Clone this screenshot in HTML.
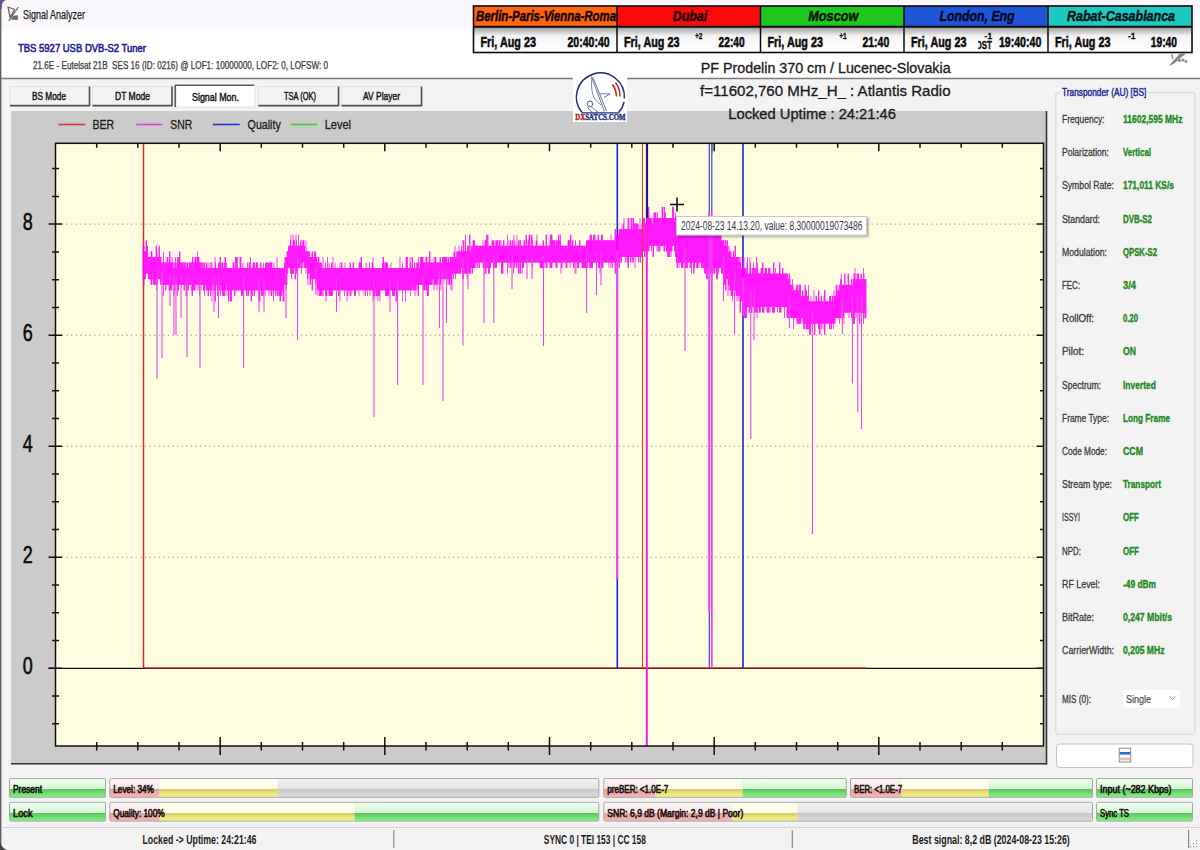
<!DOCTYPE html>
<html><head><meta charset="utf-8"><title>Signal Analyzer</title>
<style>html,body{margin:0;padding:0;background:#f3f3f3;overflow:hidden}svg{display:block}</style>
</head><body>
<svg width="1200" height="850" viewBox="0 0 1200 850"><defs><linearGradient id="gDate" x1="0" y1="0" x2="0" y2="1"><stop offset="0" stop-color="#9a9a9a"/><stop offset="0.35" stop-color="#f4f4f4"/><stop offset="1" stop-color="#ffffff"/></linearGradient><linearGradient id="gG" x1="0" y1="0" x2="0" y2="1"><stop offset="0" stop-color="#f2fff2"/><stop offset="0.55" stop-color="#d4f8d4"/><stop offset="0.55" stop-color="#62bc62"/><stop offset="0.8" stop-color="#6ee26e"/><stop offset="1" stop-color="#8cee8c"/></linearGradient><linearGradient id="gR" x1="0" y1="0" x2="0" y2="1"><stop offset="0" stop-color="#fff6f6"/><stop offset="0.55" stop-color="#f8e6e6"/><stop offset="0.55" stop-color="#dca0a0"/><stop offset="0.8" stop-color="#f0acac"/><stop offset="1" stop-color="#f6baba"/></linearGradient><linearGradient id="gY" x1="0" y1="0" x2="0" y2="1"><stop offset="0" stop-color="#fffff2"/><stop offset="0.55" stop-color="#fcfce2"/><stop offset="0.55" stop-color="#d2c86a"/><stop offset="0.8" stop-color="#eee67c"/><stop offset="1" stop-color="#f6f08c"/></linearGradient><linearGradient id="gN" x1="0" y1="0" x2="0" y2="1"><stop offset="0" stop-color="#f2f2f2"/><stop offset="0.55" stop-color="#e4e4e4"/><stop offset="0.55" stop-color="#c6c6c6"/><stop offset="0.8" stop-color="#d2d2d2"/><stop offset="1" stop-color="#dadada"/></linearGradient><filter id="sh" x="-5%" y="-20%" width="115%" height="160%"><feDropShadow dx="1.5" dy="1.5" stdDeviation="1.2" flood-color="#000" flood-opacity="0.35"/></filter></defs>
<rect x="0" y="0" width="1200" height="850" fill="#f3f3f3" />
<rect x="0" y="0" width="1200" height="29" fill="#faf8fc" />
<rect x="0" y="29" width="1200" height="49" fill="#ffffff" />
<line x1="0" y1="78.5" x2="1200" y2="78.5" stroke="#7a7a7a" stroke-width="1.6" />
<line x1="0.7" y1="0" x2="0.7" y2="850" stroke="#606060" stroke-width="1.4" />
<path d="M0 0 H6 Q1.6 1.6 1.6 7 V9 H0 Z" fill="#6a4c8c"/>
<path d="M0 850 V842 Q1.6 848 7 850 Z" fill="#404040"/>
<text x="23" y="18.8" font-family="'Liberation Sans', sans-serif" font-size="13.08" fill="#1a1a1a" stroke="#1a1a1a" stroke-width="0.25" textLength="62" lengthAdjust="spacingAndGlyphs" >Signal Analyzer</text>
<g stroke="#666" stroke-width="1.3" fill="none" stroke-linecap="round"><path d="M8 7 L10.5 19 M8 7 L14.5 9.5 M18 7.5 L9 20.5 M14.5 9.5 L10.5 17"/><path d="M12.5 16.5 L17.5 15.5 L17.5 19.5 L12 19.5 Z" fill="#666" stroke-width="0.6"/></g>
<text x="18" y="51.7" font-family="'Liberation Sans', sans-serif" font-size="11.63" fill="#1c1c96" stroke="#1c1c96" stroke-width="0.6" textLength="128" lengthAdjust="spacingAndGlyphs" >TBS 5927 USB DVB-S2 Tuner</text>
<text x="33" y="68.7" font-family="'Liberation Sans', sans-serif" font-size="10.17" fill="#3a3a3a" stroke="#3a3a3a" stroke-width="0.25" textLength="295" lengthAdjust="spacingAndGlyphs" >21.6E - Eutelsat 21B  SES 16 (ID: 0216) @ LOF1: 10000000, LOF2: 0, LOFSW: 0</text>
<rect x="473.5" y="6" width="143.8" height="20.5" fill="#ff6410" />
<rect x="473.5" y="27" width="143.8" height="25.5" fill="url(#gDate)" />
<rect x="617" y="6" width="143.8" height="20.5" fill="#ff0a0a" />
<rect x="617" y="27" width="143.8" height="25.5" fill="url(#gDate)" />
<rect x="760.5" y="6" width="143.8" height="20.5" fill="#1fc81f" />
<rect x="760.5" y="27" width="143.8" height="25.5" fill="url(#gDate)" />
<rect x="904" y="6" width="143.8" height="20.5" fill="#1f56d8" />
<rect x="904" y="27" width="143.8" height="25.5" fill="url(#gDate)" />
<rect x="1048" y="6" width="143.8" height="20.5" fill="#1fc8c0" />
<rect x="1048" y="27" width="143.8" height="25.5" fill="url(#gDate)" />
<clipPath id="cBer"><rect x="474" y="6" width="142" height="21"/></clipPath>
<text x="476" y="20.6" font-family="'Liberation Sans', sans-serif" font-size="15.55" fill="#1a0800" stroke="#1a0800" stroke-width="0.55" font-weight="bold" font-style="italic" textLength="140" lengthAdjust="spacingAndGlyphs" clip-path="url(#cBer)">Berlin-Paris-Vienna-Roma</text>
<text x="672.7" y="20.6" font-family="'Liberation Sans', sans-serif" font-size="15.55" fill="#1a0000" stroke="#1a0000" stroke-width="0.55" font-weight="bold" font-style="italic" textLength="34.5" lengthAdjust="spacingAndGlyphs" >Dubai</text>
<text x="808.3" y="20.6" font-family="'Liberation Sans', sans-serif" font-size="15.55" fill="#001a00" stroke="#001a00" stroke-width="0.55" font-weight="bold" font-style="italic" textLength="50" lengthAdjust="spacingAndGlyphs" >Moscow</text>
<text x="939.6" y="20.6" font-family="'Liberation Sans', sans-serif" font-size="15.55" fill="#000a2a" stroke="#000a2a" stroke-width="0.55" font-weight="bold" font-style="italic" textLength="75" lengthAdjust="spacingAndGlyphs" >London, Eng</text>
<text x="1067" y="20.6" font-family="'Liberation Sans', sans-serif" font-size="15.55" fill="#001a1a" stroke="#001a1a" stroke-width="0.55" font-weight="bold" font-style="italic" textLength="108" lengthAdjust="spacingAndGlyphs" >Rabat-Casablanca</text>
<text x="480.5" y="47.1" font-family="'Liberation Sans', sans-serif" font-size="15.26" fill="#0a0a0a" stroke="#0a0a0a" stroke-width="0.55" font-weight="bold" textLength="55.4" lengthAdjust="spacingAndGlyphs" >Fri, Aug 23</text>
<text x="624" y="47.1" font-family="'Liberation Sans', sans-serif" font-size="15.26" fill="#0a0a0a" stroke="#0a0a0a" stroke-width="0.55" font-weight="bold" textLength="55.4" lengthAdjust="spacingAndGlyphs" >Fri, Aug 23</text>
<text x="767.5" y="47.1" font-family="'Liberation Sans', sans-serif" font-size="15.26" fill="#0a0a0a" stroke="#0a0a0a" stroke-width="0.55" font-weight="bold" textLength="55.4" lengthAdjust="spacingAndGlyphs" >Fri, Aug 23</text>
<text x="911" y="47.1" font-family="'Liberation Sans', sans-serif" font-size="15.26" fill="#0a0a0a" stroke="#0a0a0a" stroke-width="0.55" font-weight="bold" textLength="55.4" lengthAdjust="spacingAndGlyphs" >Fri, Aug 23</text>
<text x="1055" y="47.1" font-family="'Liberation Sans', sans-serif" font-size="15.26" fill="#0a0a0a" stroke="#0a0a0a" stroke-width="0.55" font-weight="bold" textLength="55.4" lengthAdjust="spacingAndGlyphs" >Fri, Aug 23</text>
<text x="567.5" y="47.1" font-family="'Liberation Sans', sans-serif" font-size="15.26" fill="#0a0a0a" stroke="#0a0a0a" stroke-width="0.55" font-weight="bold" textLength="42.1" lengthAdjust="spacingAndGlyphs" >20:40:40</text>
<text x="718.6" y="47.1" font-family="'Liberation Sans', sans-serif" font-size="15.26" fill="#0a0a0a" stroke="#0a0a0a" stroke-width="0.55" font-weight="bold" textLength="26.1" lengthAdjust="spacingAndGlyphs" >22:40</text>
<text x="862.5" y="47.1" font-family="'Liberation Sans', sans-serif" font-size="15.26" fill="#0a0a0a" stroke="#0a0a0a" stroke-width="0.55" font-weight="bold" textLength="26.7" lengthAdjust="spacingAndGlyphs" >21:40</text>
<text x="998.9" y="47.1" font-family="'Liberation Sans', sans-serif" font-size="15.26" fill="#0a0a0a" stroke="#0a0a0a" stroke-width="0.55" font-weight="bold" textLength="42.4" lengthAdjust="spacingAndGlyphs" >19:40:40</text>
<text x="1150.8" y="47.1" font-family="'Liberation Sans', sans-serif" font-size="15.26" fill="#0a0a0a" stroke="#0a0a0a" stroke-width="0.55" font-weight="bold" textLength="26.2" lengthAdjust="spacingAndGlyphs" >19:40</text>
<text x="695" y="39" font-family="'Liberation Sans', sans-serif" font-size="9.88" fill="#0a0a0a" stroke="#0a0a0a" stroke-width="0.3" font-weight="bold" textLength="7.5" lengthAdjust="spacingAndGlyphs" >+2</text>
<text x="839.2" y="39.2" font-family="'Liberation Sans', sans-serif" font-size="9.88" fill="#0a0a0a" stroke="#0a0a0a" stroke-width="0.3" font-weight="bold" textLength="7.5" lengthAdjust="spacingAndGlyphs" >+1</text>
<text x="984.6" y="39.2" font-family="'Liberation Sans', sans-serif" font-size="9.88" fill="#0a0a0a" stroke="#0a0a0a" stroke-width="0.3" font-weight="bold" textLength="7.5" lengthAdjust="spacingAndGlyphs" >-1</text>
<text x="1128" y="38.9" font-family="'Liberation Sans', sans-serif" font-size="9.88" fill="#0a0a0a" stroke="#0a0a0a" stroke-width="0.3" font-weight="bold" textLength="7.5" lengthAdjust="spacingAndGlyphs" >-1</text>
<clipPath id="cDst"><rect x="978.3" y="38" width="20" height="14"/></clipPath>
<text x="976" y="48.8" font-family="'Liberation Sans', sans-serif" font-size="10.9" fill="#0a0a0a" stroke="#0a0a0a" stroke-width="0.3" font-weight="bold" textLength="16" lengthAdjust="spacingAndGlyphs" clip-path="url(#cDst)">DST</text>
<g stroke="#0a0a0a" fill="none"><rect x="473.5" y="6" width="718.5" height="46.5" stroke-width="1.6"/><line x1="473.5" y1="26.7" x2="1192" y2="26.7" stroke-width="2"/><line x1="617" y1="6" x2="617" y2="52.5" stroke-width="1.5"/><line x1="760.5" y1="6" x2="760.5" y2="52.5" stroke-width="1.5"/><line x1="904" y1="6" x2="904" y2="52.5" stroke-width="1.5"/><line x1="1048" y1="6" x2="1048" y2="52.5" stroke-width="1.5"/></g>
<path d="M1168.5 66 L1180 53.5 L1186 53.5 L1173.5 64 Z" fill="#858585"/><path d="M1171.5 53.5 L1172.8 59" stroke="#9a9a9a" stroke-width="1.5"/><g fill="#8a8a8a"><circle cx="1179.5" cy="60.5" r="1.6"/><circle cx="1183" cy="60" r="1.6"/><circle cx="1186" cy="61.5" r="1.4"/></g>
<rect x="10" y="86.5" width="80" height="19.5" fill="#f2f2f2" stroke="#e2e2e2" stroke-width="1" />
<line x1="89.5" y1="86.5" x2="89.5" y2="106" stroke="#505050" stroke-width="1.6" />
<line x1="10" y1="105.6" x2="90" y2="105.6" stroke="#505050" stroke-width="1.8" />
<rect x="92.5" y="86.5" width="80.0" height="19.5" fill="#f2f2f2" stroke="#e2e2e2" stroke-width="1" />
<line x1="172.0" y1="86.5" x2="172.0" y2="106" stroke="#505050" stroke-width="1.6" />
<line x1="92.5" y1="105.6" x2="172.5" y2="105.6" stroke="#505050" stroke-width="1.8" />
<rect x="175" y="85.5" width="80" height="21.5" fill="#ffffff" stroke="#e4e4e4" stroke-width="1" />
<line x1="175" y1="85.2" x2="254" y2="85.2" stroke="#5a5a5a" stroke-width="1.6" />
<line x1="175.3" y1="85" x2="175.3" y2="107" stroke="#5a5a5a" stroke-width="1.6" />
<rect x="258.5" y="86.5" width="80.5" height="19.5" fill="#f2f2f2" stroke="#e2e2e2" stroke-width="1" />
<line x1="338.5" y1="86.5" x2="338.5" y2="106" stroke="#505050" stroke-width="1.6" />
<line x1="258.5" y1="105.6" x2="339" y2="105.6" stroke="#505050" stroke-width="1.8" />
<rect x="341.5" y="86.5" width="80.5" height="19.5" fill="#f2f2f2" stroke="#e2e2e2" stroke-width="1" />
<line x1="421.5" y1="86.5" x2="421.5" y2="106" stroke="#505050" stroke-width="1.6" />
<line x1="341.5" y1="105.6" x2="422" y2="105.6" stroke="#505050" stroke-width="1.8" />
<text x="32" y="99.8" font-family="'Liberation Sans', sans-serif" font-size="11.05" fill="#141414" stroke="#141414" stroke-width="0.45" textLength="34" lengthAdjust="spacingAndGlyphs" >BS Mode</text>
<text x="115" y="99.8" font-family="'Liberation Sans', sans-serif" font-size="11.05" fill="#141414" stroke="#141414" stroke-width="0.45" textLength="35" lengthAdjust="spacingAndGlyphs" >DT Mode</text>
<text x="192" y="101" font-family="'Liberation Sans', sans-serif" font-size="11.05" fill="#141414" stroke="#141414" stroke-width="0.45" textLength="47" lengthAdjust="spacingAndGlyphs" >Signal Mon.</text>
<text x="284" y="99.8" font-family="'Liberation Sans', sans-serif" font-size="11.05" fill="#141414" stroke="#141414" stroke-width="0.45" textLength="32" lengthAdjust="spacingAndGlyphs" >TSA (OK)</text>
<text x="363" y="99.8" font-family="'Liberation Sans', sans-serif" font-size="11.05" fill="#141414" stroke="#141414" stroke-width="0.45" textLength="37" lengthAdjust="spacingAndGlyphs" >AV Player</text>
<rect x="11" y="111" width="1036" height="653" fill="#cbcbcb" />
<line x1="1046.5" y1="111" x2="1046.5" y2="764.5" stroke="#333" stroke-width="1.6" />
<line x1="11" y1="763.8" x2="1047" y2="763.8" stroke="#333" stroke-width="1.6" />
<rect x="55.5" y="143.3" width="988.0" height="602.7" fill="#fffde0" />
<line x1="58.4" y1="124.5" x2="85.3" y2="124.5" stroke="#e03030" stroke-width="1.6" />
<text x="92.4" y="129.3" font-family="'Liberation Sans', sans-serif" font-size="13.37" fill="#1a1a1a" stroke="#1a1a1a" stroke-width="0.3" textLength="21.8" lengthAdjust="spacingAndGlyphs" >BER</text>
<line x1="136.3" y1="124.5" x2="162.4" y2="124.5" stroke="#e040e0" stroke-width="1.6" />
<text x="170.3" y="129.3" font-family="'Liberation Sans', sans-serif" font-size="13.37" fill="#1a1a1a" stroke="#1a1a1a" stroke-width="0.3" textLength="22" lengthAdjust="spacingAndGlyphs" >SNR</text>
<line x1="212.8" y1="124.5" x2="239.7" y2="124.5" stroke="#3030e0" stroke-width="1.6" />
<text x="247.6" y="129.3" font-family="'Liberation Sans', sans-serif" font-size="13.37" fill="#1a1a1a" stroke="#1a1a1a" stroke-width="0.3" textLength="33.2" lengthAdjust="spacingAndGlyphs" >Quality</text>
<line x1="290.7" y1="124.5" x2="317.6" y2="124.5" stroke="#30d030" stroke-width="1.6" />
<text x="324.7" y="129.3" font-family="'Liberation Sans', sans-serif" font-size="13.37" fill="#1a1a1a" stroke="#1a1a1a" stroke-width="0.3" textLength="26.3" lengthAdjust="spacingAndGlyphs" >Level</text>
<line x1="62" y1="557.26" x2="1036.5" y2="557.26" stroke="#8a8a8a" stroke-width="1" stroke-dasharray="1.2 3.4"/>
<line x1="62" y1="446.2199999999999" x2="1036.5" y2="446.2199999999999" stroke="#8a8a8a" stroke-width="1" stroke-dasharray="1.2 3.4"/>
<line x1="62" y1="335.17999999999995" x2="1036.5" y2="335.17999999999995" stroke="#8a8a8a" stroke-width="1" stroke-dasharray="1.2 3.4"/>
<line x1="62" y1="224.13999999999993" x2="1036.5" y2="224.13999999999993" stroke="#8a8a8a" stroke-width="1" stroke-dasharray="1.2 3.4"/>
<line x1="48.5" y1="668.3" x2="1043.5" y2="668.3" stroke="#111" stroke-width="1.2" />
<path d="M52 723.8H59 M1040.0 723.8H1043.5 M52 696.1H59 M1040.0 696.1H1043.5 M48.5 668.3H62 M1036.5 668.3H1043.5 M52 640.5H59 M1040.0 640.5H1043.5 M52 612.8H59 M1040.0 612.8H1043.5 M52 585.0H59 M1040.0 585.0H1043.5 M48.5 557.3H62 M1036.5 557.3H1043.5 M52 529.5H59 M1040.0 529.5H1043.5 M52 501.7H59 M1040.0 501.7H1043.5 M52 474.0H59 M1040.0 474.0H1043.5 M48.5 446.2H62 M1036.5 446.2H1043.5 M52 418.5H59 M1040.0 418.5H1043.5 M52 390.7H59 M1040.0 390.7H1043.5 M52 362.9H59 M1040.0 362.9H1043.5 M48.5 335.2H62 M1036.5 335.2H1043.5 M52 307.4H59 M1040.0 307.4H1043.5 M52 279.7H59 M1040.0 279.7H1043.5 M52 251.9H59 M1040.0 251.9H1043.5 M48.5 224.1H62 M1036.5 224.1H1043.5 M52 196.4H59 M1040.0 196.4H1043.5 M52 168.6H59 M1040.0 168.6H1043.5 M96.7 143.3V147.8 M96.7 742.0V750.5 M137.8 143.3V147.8 M137.8 742.0V750.5 M179.0 143.3V147.8 M179.0 742.0V750.5 M220.2 143.3V151.3 M220.2 737.0V755.0 M261.3 143.3V147.8 M261.3 742.0V750.5 M302.5 143.3V147.8 M302.5 742.0V750.5 M343.7 143.3V147.8 M343.7 742.0V750.5 M384.8 143.3V151.3 M384.8 737.0V755.0 M426.0 143.3V147.8 M426.0 742.0V750.5 M467.2 143.3V147.8 M467.2 742.0V750.5 M508.3 143.3V147.8 M508.3 742.0V750.5 M549.5 143.3V151.3 M549.5 737.0V755.0 M590.7 143.3V147.8 M590.7 742.0V750.5 M631.8 143.3V147.8 M631.8 742.0V750.5 M673.0 143.3V147.8 M673.0 742.0V750.5 M714.2 143.3V151.3 M714.2 737.0V755.0 M755.3 143.3V147.8 M755.3 742.0V750.5 M796.5 143.3V147.8 M796.5 742.0V750.5 M837.7 143.3V147.8 M837.7 742.0V750.5 M878.8 143.3V151.3 M878.8 737.0V755.0 M920.0 143.3V147.8 M920.0 742.0V750.5 M961.2 143.3V147.8 M961.2 742.0V750.5 M1002.3 143.3V147.8 M1002.3 742.0V750.5" stroke="#111" stroke-width="1.5" fill="none"/>
<text x="22.8" y="674.1999999999999" font-family="'Liberation Sans', sans-serif" font-size="24.13" fill="#0a0a0a" stroke="#0a0a0a" stroke-width="0.6" textLength="10" lengthAdjust="spacingAndGlyphs" >0</text>
<text x="22.8" y="563.16" font-family="'Liberation Sans', sans-serif" font-size="24.13" fill="#0a0a0a" stroke="#0a0a0a" stroke-width="0.6" textLength="10" lengthAdjust="spacingAndGlyphs" >2</text>
<text x="22.8" y="452.1199999999999" font-family="'Liberation Sans', sans-serif" font-size="24.13" fill="#0a0a0a" stroke="#0a0a0a" stroke-width="0.6" textLength="10" lengthAdjust="spacingAndGlyphs" >4</text>
<text x="22.8" y="341.0799999999999" font-family="'Liberation Sans', sans-serif" font-size="24.13" fill="#0a0a0a" stroke="#0a0a0a" stroke-width="0.6" textLength="10" lengthAdjust="spacingAndGlyphs" >6</text>
<text x="22.8" y="230.03999999999994" font-family="'Liberation Sans', sans-serif" font-size="24.13" fill="#0a0a0a" stroke="#0a0a0a" stroke-width="0.6" textLength="10" lengthAdjust="spacingAndGlyphs" >8</text>
<path d="M143.5 143.3V668" stroke="#e02828" stroke-width="1.5" fill="none"/><path d="M143.5 668.2H866" stroke="#981010" stroke-width="1.4" fill="none"/>
<path d="M617.3 143.3V668 M743 143.3V668" stroke="#2222dd" stroke-width="1.6" fill="none"/>
<path d="M709.3 143.3V668 M711.8 143.3V212" stroke="#5050e0" stroke-width="1.3" fill="none"/>
<path d="M712 143.3V153" stroke="#6a6aa0" stroke-width="1.4" fill="none"/>
<path d="M647 143.3V220" stroke="#2a1080" stroke-width="2.2" fill="none"/>
<path d="M143.0 245.8V279.2 M143.5 245.8V279.2 M144.0 245.8V284.8 M144.5 251.4V279.2 M145.0 251.4V279.2 M145.5 251.4V279.2 M146.0 240.3V273.6 M146.5 240.3V273.6 M147.0 245.8V273.6 M147.5 245.8V273.6 M148.0 257.0V273.6 M148.5 257.0V279.2 M149.0 257.0V279.2 M149.5 257.0V279.2 M150.0 257.0V279.2 M150.5 257.0V279.2 M151.0 251.4V284.8 M151.5 251.4V284.8 M152.0 251.4V284.8 M152.5 257.0V279.2 M153.0 257.0V279.2 M153.5 257.0V284.8 M154.0 257.0V284.8 M154.5 257.0V284.8 M155.0 257.0V284.8 M155.5 257.0V284.8 M156.0 245.8V279.2 M156.5 245.8V290.3 M157.0 251.4V279.2 M157.5 257.0V284.8 M158.0 257.0V279.2 M158.5 257.0V279.2 M159.0 245.8V279.2 M159.5 245.8V279.2 M160.0 257.0V279.2 M160.5 257.0V284.8 M161.0 257.0V284.8 M161.5 262.5V279.2 M162.0 262.5V284.8 M162.5 262.5V279.2 M163.0 262.5V284.8 M163.5 251.4V295.9 M164.0 262.5V284.8 M164.5 262.5V284.8 M165.0 262.5V284.8 M165.5 262.5V290.3 M166.0 262.5V290.3 M166.5 262.5V284.8 M167.0 257.0V284.8 M167.5 257.0V284.8 M168.0 257.0V284.8 M168.5 262.5V284.8 M169.0 262.5V290.3 M169.5 251.4V290.3 M170.0 251.4V290.3 M170.5 262.5V290.3 M171.0 262.5V290.3 M171.5 262.5V290.3 M172.0 257.0V290.3 M172.5 262.5V284.8 M173.0 262.5V284.8 M173.5 268.1V284.8 M174.0 262.5V295.9 M174.5 268.1V290.3 M175.0 262.5V290.3 M175.5 257.0V284.8 M176.0 262.5V284.8 M176.5 268.1V284.8 M177.0 262.5V284.8 M177.5 257.0V295.9 M178.0 262.5V290.3 M178.5 257.0V290.3 M179.0 257.0V284.8 M179.5 251.4V284.8 M180.0 251.4V284.8 M180.5 262.5V284.8 M181.0 262.5V284.8 M181.5 262.5V284.8 M182.0 262.5V284.8 M182.5 262.5V284.8 M183.0 268.1V284.8 M183.5 262.5V284.8 M184.0 262.5V290.3 M184.5 262.5V290.3 M185.0 268.1V284.8 M185.5 262.5V284.8 M186.0 262.5V295.9 M186.5 268.1V295.9 M187.0 262.5V284.8 M187.5 262.5V290.3 M188.0 262.5V284.8 M188.5 268.1V290.3 M189.0 268.1V284.8 M189.5 262.5V284.8 M190.0 262.5V284.8 M190.5 262.5V284.8 M191.0 262.5V290.3 M191.5 262.5V284.8 M192.0 262.5V295.9 M192.5 257.0V295.9 M193.0 257.0V290.3 M193.5 262.5V290.3 M194.0 268.1V290.3 M194.5 262.5V290.3 M195.0 257.0V290.3 M195.5 257.0V284.8 M196.0 257.0V284.8 M196.5 262.5V284.8 M197.0 257.0V290.3 M197.5 251.4V284.8 M198.0 257.0V284.8 M198.5 257.0V284.8 M199.0 257.0V290.3 M199.5 262.5V295.9 M200.0 262.5V284.8 M200.5 262.5V284.8 M201.0 262.5V290.3 M201.5 262.5V284.8 M202.0 268.1V284.8 M202.5 262.5V284.8 M203.0 268.1V284.8 M203.5 262.5V290.3 M204.0 268.1V290.3 M204.5 262.5V295.9 M205.0 268.1V290.3 M205.5 268.1V284.8 M206.0 262.5V284.8 M206.5 262.5V290.3 M207.0 268.1V290.3 M207.5 268.1V290.3 M208.0 262.5V295.9 M208.5 268.1V295.9 M209.0 268.1V290.3 M209.5 268.1V290.3 M210.0 262.5V290.3 M210.5 268.1V295.9 M211.0 262.5V290.3 M211.5 268.1V290.3 M212.0 262.5V301.4 M212.5 268.1V284.8 M213.0 268.1V290.3 M213.5 268.1V284.8 M214.0 268.1V290.3 M214.5 268.1V290.3 M215.0 257.0V301.4 M215.5 262.5V301.4 M216.0 268.1V284.8 M216.5 268.1V284.8 M217.0 268.1V290.3 M217.5 268.1V295.9 M218.0 268.1V284.8 M218.5 262.5V301.4 M219.0 268.1V290.3 M219.5 262.5V290.3 M220.0 257.0V284.8 M220.5 257.0V295.9 M221.0 268.1V284.8 M221.5 262.5V290.3 M222.0 268.1V290.3 M222.5 262.5V295.9 M223.0 262.5V295.9 M223.5 268.1V295.9 M224.0 268.1V295.9 M224.5 262.5V295.9 M225.0 257.0V290.3 M225.5 257.0V290.3 M226.0 268.1V295.9 M226.5 262.5V284.8 M227.0 268.1V290.3 M227.5 268.1V290.3 M228.0 268.1V295.9 M228.5 268.1V301.4 M229.0 268.1V301.4 M229.5 268.1V290.3 M230.0 268.1V284.8 M230.5 268.1V301.4 M231.0 268.1V301.4 M231.5 268.1V301.4 M232.0 268.1V290.3 M232.5 268.1V290.3 M233.0 262.5V290.3 M233.5 262.5V290.3 M234.0 262.5V284.8 M234.5 268.1V295.9 M235.0 268.1V295.9 M235.5 257.0V290.3 M236.0 257.0V290.3 M236.5 257.0V290.3 M237.0 268.1V290.3 M237.5 257.0V290.3 M238.0 268.1V290.3 M238.5 268.1V290.3 M239.0 268.1V290.3 M239.5 268.1V290.3 M240.0 257.0V290.3 M240.5 257.0V290.3 M241.0 257.0V290.3 M241.5 268.1V295.9 M242.0 268.1V295.9 M242.5 268.1V295.9 M243.0 262.5V295.9 M243.5 268.1V290.3 M244.0 268.1V290.3 M244.5 268.1V290.3 M245.0 268.1V290.3 M245.5 268.1V290.3 M246.0 268.1V290.3 M246.5 268.1V295.9 M247.0 268.1V295.9 M247.5 262.5V290.3 M248.0 268.1V295.9 M248.5 268.1V295.9 M249.0 262.5V290.3 M249.5 262.5V290.3 M250.0 268.1V290.3 M250.5 257.0V290.3 M251.0 268.1V301.4 M251.5 268.1V301.4 M252.0 268.1V290.3 M252.5 268.1V295.9 M253.0 262.5V290.3 M253.5 262.5V290.3 M254.0 262.5V295.9 M254.5 262.5V295.9 M255.0 268.1V290.3 M255.5 268.1V290.3 M256.0 262.5V290.3 M256.5 262.5V290.3 M257.0 262.5V290.3 M257.5 262.5V290.3 M258.0 268.1V290.3 M258.5 268.1V290.3 M259.0 268.1V301.4 M259.5 268.1V301.4 M260.0 268.1V301.4 M260.5 262.5V290.3 M261.0 262.5V290.3 M261.5 268.1V295.9 M262.0 268.1V295.9 M262.5 268.1V295.9 M263.0 268.1V290.3 M263.5 262.5V295.9 M264.0 268.1V290.3 M264.5 268.1V290.3 M265.0 268.1V295.9 M265.5 262.5V290.3 M266.0 262.5V290.3 M266.5 262.5V290.3 M267.0 268.1V290.3 M267.5 262.5V290.3 M268.0 262.5V290.3 M268.5 262.5V290.3 M269.0 268.1V295.9 M269.5 262.5V290.3 M270.0 262.5V290.3 M270.5 262.5V290.3 M271.0 262.5V295.9 M271.5 262.5V295.9 M272.0 262.5V295.9 M272.5 268.1V290.3 M273.0 268.1V290.3 M273.5 268.1V301.4 M274.0 262.5V290.3 M274.5 268.1V290.3 M275.0 268.1V290.3 M275.5 268.1V295.9 M276.0 268.1V295.9 M276.5 268.1V290.3 M277.0 257.0V290.3 M277.5 268.1V295.9 M278.0 268.1V295.9 M278.5 268.1V290.3 M279.0 268.1V295.9 M279.5 268.1V295.9 M280.0 268.1V301.4 M280.5 268.1V301.4 M281.0 268.1V295.9 M281.5 268.1V295.9 M282.0 268.1V290.3 M282.5 268.1V290.3 M283.0 268.1V301.4 M283.5 268.1V301.4 M284.0 268.1V301.4 M284.5 262.5V284.8 M285.0 257.0V284.8 M285.5 257.0V284.8 M286.0 257.0V290.3 M286.5 257.0V284.8 M287.0 251.4V284.8 M287.5 251.4V273.6 M288.0 251.4V268.1 M288.5 245.8V268.1 M289.0 245.8V268.1 M289.5 245.8V268.1 M290.0 245.8V268.1 M290.5 240.3V273.6 M291.0 234.7V273.6 M291.5 245.8V279.2 M292.0 245.8V273.6 M292.5 245.8V273.6 M293.0 234.7V273.6 M293.5 240.3V273.6 M294.0 240.3V268.1 M294.5 240.3V268.1 M295.0 245.8V279.2 M295.5 245.8V279.2 M296.0 234.7V268.1 M296.5 240.3V273.6 M297.0 245.8V273.6 M297.5 245.8V268.1 M298.0 245.8V268.1 M298.5 234.7V268.1 M299.0 245.8V268.1 M299.5 245.8V268.1 M300.0 245.8V262.5 M300.5 240.3V268.1 M301.0 245.8V262.5 M301.5 245.8V273.6 M302.0 240.3V268.1 M302.5 245.8V262.5 M303.0 240.3V268.1 M303.5 240.3V262.5 M304.0 240.3V262.5 M304.5 245.8V268.1 M305.0 245.8V268.1 M305.5 251.4V268.1 M306.0 240.3V273.6 M306.5 251.4V268.1 M307.0 251.4V268.1 M307.5 251.4V279.2 M308.0 251.4V284.8 M308.5 251.4V273.6 M309.0 251.4V273.6 M309.5 251.4V273.6 M310.0 257.0V284.8 M310.5 257.0V284.8 M311.0 257.0V279.2 M311.5 257.0V279.2 M312.0 251.4V290.3 M312.5 251.4V290.3 M313.0 257.0V279.2 M313.5 257.0V279.2 M314.0 257.0V279.2 M314.5 251.4V279.2 M315.0 251.4V279.2 M315.5 251.4V284.8 M316.0 257.0V279.2 M316.5 257.0V279.2 M317.0 257.0V290.3 M317.5 262.5V290.3 M318.0 262.5V295.9 M318.5 257.0V290.3 M319.0 257.0V290.3 M319.5 262.5V295.9 M320.0 262.5V295.9 M320.5 262.5V295.9 M321.0 262.5V295.9 M321.5 262.5V295.9 M322.0 268.1V295.9 M322.5 268.1V290.3 M323.0 257.0V295.9 M323.5 268.1V290.3 M324.0 268.1V290.3 M324.5 268.1V290.3 M325.0 268.1V290.3 M325.5 262.5V295.9 M326.0 268.1V301.4 M326.5 268.1V295.9 M327.0 268.1V295.9 M327.5 257.0V290.3 M328.0 268.1V290.3 M328.5 268.1V290.3 M329.0 262.5V295.9 M329.5 268.1V295.9 M330.0 268.1V295.9 M330.5 268.1V295.9 M331.0 268.1V295.9 M331.5 262.5V295.9 M332.0 262.5V295.9 M332.5 268.1V295.9 M333.0 257.0V290.3 M333.5 268.1V290.3 M334.0 268.1V290.3 M334.5 268.1V290.3 M335.0 262.5V290.3 M335.5 268.1V290.3 M336.0 268.1V290.3 M336.5 268.1V290.3 M337.0 268.1V290.3 M337.5 268.1V290.3 M338.0 268.1V290.3 M338.5 268.1V295.9 M339.0 268.1V295.9 M339.5 268.1V290.3 M340.0 262.5V301.4 M340.5 268.1V290.3 M341.0 268.1V290.3 M341.5 262.5V290.3 M342.0 262.5V290.3 M342.5 268.1V290.3 M343.0 268.1V290.3 M343.5 268.1V290.3 M344.0 268.1V290.3 M344.5 268.1V295.9 M345.0 262.5V290.3 M345.5 268.1V290.3 M346.0 268.1V290.3 M346.5 268.1V290.3 M347.0 268.1V301.4 M347.5 268.1V295.9 M348.0 268.1V295.9 M348.5 268.1V290.3 M349.0 268.1V290.3 M349.5 268.1V290.3 M350.0 262.5V295.9 M350.5 262.5V295.9 M351.0 268.1V295.9 M351.5 268.1V290.3 M352.0 268.1V290.3 M352.5 268.1V290.3 M353.0 262.5V290.3 M353.5 262.5V290.3 M354.0 268.1V290.3 M354.5 268.1V295.9 M355.0 268.1V295.9 M355.5 268.1V295.9 M356.0 268.1V290.3 M356.5 268.1V290.3 M357.0 268.1V290.3 M357.5 268.1V290.3 M358.0 268.1V290.3 M358.5 268.1V290.3 M359.0 262.5V295.9 M359.5 262.5V290.3 M360.0 262.5V290.3 M360.5 262.5V290.3 M361.0 257.0V290.3 M361.5 257.0V290.3 M362.0 268.1V290.3 M362.5 268.1V290.3 M363.0 268.1V290.3 M363.5 268.1V290.3 M364.0 268.1V295.9 M364.5 268.1V290.3 M365.0 268.1V290.3 M365.5 268.1V295.9 M366.0 262.5V290.3 M366.5 268.1V290.3 M367.0 268.1V290.3 M367.5 268.1V295.9 M368.0 268.1V290.3 M368.5 268.1V290.3 M369.0 268.1V290.3 M369.5 262.5V290.3 M370.0 268.1V295.9 M370.5 268.1V290.3 M371.0 268.1V290.3 M371.5 268.1V290.3 M372.0 262.5V290.3 M372.5 262.5V290.3 M373.0 257.0V301.4 M373.5 268.1V295.9 M374.0 268.1V295.9 M374.5 268.1V295.9 M375.0 268.1V295.9 M375.5 268.1V290.3 M376.0 268.1V295.9 M376.5 268.1V295.9 M377.0 268.1V295.9 M377.5 268.1V295.9 M378.0 268.1V301.4 M378.5 268.1V295.9 M379.0 268.1V295.9 M379.5 268.1V295.9 M380.0 268.1V301.4 M380.5 268.1V290.3 M381.0 268.1V290.3 M381.5 268.1V290.3 M382.0 268.1V290.3 M382.5 262.5V290.3 M383.0 257.0V290.3 M383.5 257.0V290.3 M384.0 262.5V290.3 M384.5 268.1V290.3 M385.0 262.5V290.3 M385.5 262.5V295.9 M386.0 262.5V295.9 M386.5 262.5V295.9 M387.0 262.5V295.9 M387.5 262.5V295.9 M388.0 268.1V295.9 M388.5 268.1V295.9 M389.0 268.1V295.9 M389.5 268.1V290.3 M390.0 268.1V290.3 M390.5 268.1V290.3 M391.0 262.5V290.3 M391.5 268.1V290.3 M392.0 268.1V290.3 M392.5 268.1V295.9 M393.0 268.1V295.9 M393.5 268.1V295.9 M394.0 268.1V295.9 M394.5 268.1V295.9 M395.0 268.1V290.3 M395.5 268.1V290.3 M396.0 268.1V301.4 M396.5 268.1V301.4 M397.0 268.1V290.3 M397.5 268.1V290.3 M398.0 268.1V290.3 M398.5 268.1V290.3 M399.0 268.1V290.3 M399.5 268.1V290.3 M400.0 257.0V290.3 M400.5 268.1V290.3 M401.0 268.1V290.3 M401.5 268.1V290.3 M402.0 268.1V290.3 M402.5 262.5V301.4 M403.0 268.1V290.3 M403.5 268.1V290.3 M404.0 268.1V290.3 M404.5 268.1V290.3 M405.0 268.1V290.3 M405.5 268.1V301.4 M406.0 257.0V290.3 M406.5 257.0V290.3 M407.0 257.0V290.3 M407.5 257.0V290.3 M408.0 268.1V290.3 M408.5 268.1V290.3 M409.0 268.1V290.3 M409.5 268.1V290.3 M410.0 257.0V290.3 M410.5 262.5V295.9 M411.0 268.1V290.3 M411.5 268.1V290.3 M412.0 257.0V284.8 M412.5 257.0V290.3 M413.0 268.1V290.3 M413.5 268.1V290.3 M414.0 268.1V284.8 M414.5 262.5V290.3 M415.0 262.5V295.9 M415.5 268.1V290.3 M416.0 268.1V290.3 M416.5 262.5V284.8 M417.0 268.1V290.3 M417.5 262.5V284.8 M418.0 262.5V295.9 M418.5 257.0V295.9 M419.0 268.1V284.8 M419.5 268.1V284.8 M420.0 262.5V284.8 M420.5 257.0V284.8 M421.0 257.0V284.8 M421.5 257.0V284.8 M422.0 257.0V284.8 M422.5 257.0V284.8 M423.0 257.0V284.8 M423.5 262.5V290.3 M424.0 262.5V290.3 M424.5 262.5V290.3 M425.0 262.5V290.3 M425.5 262.5V284.8 M426.0 257.0V290.3 M426.5 257.0V290.3 M427.0 257.0V290.3 M427.5 262.5V295.9 M428.0 262.5V295.9 M428.5 262.5V295.9 M429.0 257.0V284.8 M429.5 251.4V284.8 M430.0 251.4V284.8 M430.5 262.5V284.8 M431.0 262.5V284.8 M431.5 262.5V284.8 M432.0 262.5V284.8 M432.5 262.5V279.2 M433.0 262.5V284.8 M433.5 262.5V279.2 M434.0 257.0V290.3 M434.5 262.5V284.8 M435.0 257.0V284.8 M435.5 257.0V284.8 M436.0 257.0V284.8 M436.5 262.5V284.8 M437.0 262.5V290.3 M437.5 262.5V284.8 M438.0 262.5V279.2 M438.5 262.5V279.2 M439.0 262.5V284.8 M439.5 262.5V284.8 M440.0 257.0V284.8 M440.5 257.0V284.8 M441.0 262.5V290.3 M441.5 262.5V279.2 M442.0 262.5V279.2 M442.5 257.0V279.2 M443.0 257.0V279.2 M443.5 257.0V279.2 M444.0 257.0V279.2 M444.5 257.0V279.2 M445.0 257.0V279.2 M445.5 257.0V279.2 M446.0 257.0V279.2 M446.5 257.0V284.8 M447.0 262.5V279.2 M447.5 262.5V279.2 M448.0 257.0V284.8 M448.5 257.0V279.2 M449.0 262.5V284.8 M449.5 262.5V284.8 M450.0 257.0V284.8 M450.5 257.0V279.2 M451.0 257.0V290.3 M451.5 257.0V284.8 M452.0 257.0V290.3 M452.5 257.0V273.6 M453.0 257.0V273.6 M453.5 257.0V279.2 M454.0 251.4V273.6 M454.5 251.4V273.6 M455.0 245.8V273.6 M455.5 257.0V279.2 M456.0 257.0V273.6 M456.5 251.4V273.6 M457.0 257.0V273.6 M457.5 251.4V273.6 M458.0 251.4V273.6 M458.5 251.4V273.6 M459.0 245.8V273.6 M459.5 251.4V273.6 M460.0 251.4V273.6 M460.5 251.4V273.6 M461.0 251.4V273.6 M461.5 245.8V268.1 M462.0 251.4V268.1 M462.5 251.4V273.6 M463.0 240.3V279.2 M463.5 240.3V279.2 M464.0 251.4V268.1 M464.5 251.4V273.6 M465.0 240.3V273.6 M465.5 234.7V273.6 M466.0 251.4V273.6 M466.5 251.4V273.6 M467.0 251.4V279.2 M467.5 245.8V273.6 M468.0 245.8V273.6 M468.5 245.8V273.6 M469.0 251.4V268.1 M469.5 234.7V273.6 M470.0 234.7V273.6 M470.5 251.4V273.6 M471.0 245.8V268.1 M471.5 245.8V268.1 M472.0 251.4V273.6 M472.5 245.8V273.6 M473.0 240.3V268.1 M473.5 240.3V268.1 M474.0 240.3V268.1 M474.5 240.3V268.1 M475.0 245.8V268.1 M475.5 245.8V262.5 M476.0 245.8V268.1 M476.5 245.8V262.5 M477.0 245.8V262.5 M477.5 245.8V268.1 M478.0 245.8V262.5 M478.5 245.8V262.5 M479.0 245.8V268.1 M479.5 245.8V268.1 M480.0 245.8V262.5 M480.5 245.8V262.5 M481.0 245.8V262.5 M481.5 245.8V262.5 M482.0 245.8V262.5 M482.5 245.8V262.5 M483.0 240.3V268.1 M483.5 245.8V268.1 M484.0 245.8V268.1 M484.5 245.8V262.5 M485.0 240.3V273.6 M485.5 240.3V273.6 M486.0 240.3V273.6 M486.5 234.7V268.1 M487.0 245.8V262.5 M487.5 234.7V268.1 M488.0 234.7V268.1 M488.5 245.8V273.6 M489.0 245.8V273.6 M489.5 245.8V273.6 M490.0 245.8V268.1 M490.5 245.8V268.1 M491.0 245.8V262.5 M491.5 245.8V262.5 M492.0 240.3V262.5 M492.5 240.3V262.5 M493.0 240.3V262.5 M493.5 240.3V268.1 M494.0 245.8V268.1 M494.5 245.8V268.1 M495.0 240.3V262.5 M495.5 245.8V268.1 M496.0 240.3V268.1 M496.5 240.3V268.1 M497.0 240.3V262.5 M497.5 240.3V262.5 M498.0 240.3V262.5 M498.5 245.8V262.5 M499.0 245.8V262.5 M499.5 240.3V262.5 M500.0 240.3V262.5 M500.5 245.8V262.5 M501.0 240.3V262.5 M501.5 245.8V273.6 M502.0 245.8V273.6 M502.5 245.8V273.6 M503.0 245.8V273.6 M503.5 240.3V262.5 M504.0 240.3V262.5 M504.5 245.8V262.5 M505.0 245.8V262.5 M505.5 245.8V262.5 M506.0 245.8V262.5 M506.5 245.8V262.5 M507.0 245.8V262.5 M507.5 234.7V273.6 M508.0 245.8V262.5 M508.5 245.8V262.5 M509.0 240.3V268.1 M509.5 245.8V262.5 M510.0 245.8V262.5 M510.5 240.3V268.1 M511.0 240.3V268.1 M511.5 245.8V262.5 M512.0 245.8V262.5 M512.5 240.3V262.5 M513.0 240.3V262.5 M513.5 245.8V273.6 M514.0 234.7V262.5 M514.5 245.8V268.1 M515.0 240.3V262.5 M515.5 245.8V262.5 M516.0 245.8V268.1 M516.5 245.8V268.1 M517.0 234.7V268.1 M517.5 245.8V262.5 M518.0 245.8V262.5 M518.5 240.3V273.6 M519.0 240.3V273.6 M519.5 245.8V262.5 M520.0 240.3V273.6 M520.5 240.3V273.6 M521.0 245.8V262.5 M521.5 245.8V262.5 M522.0 245.8V273.6 M522.5 245.8V268.1 M523.0 245.8V268.1 M523.5 245.8V268.1 M524.0 240.3V262.5 M524.5 240.3V262.5 M525.0 240.3V262.5 M525.5 245.8V262.5 M526.0 234.7V262.5 M526.5 234.7V262.5 M527.0 245.8V262.5 M527.5 245.8V262.5 M528.0 240.3V262.5 M528.5 240.3V262.5 M529.0 234.7V262.5 M529.5 234.7V262.5 M530.0 234.7V262.5 M530.5 245.8V262.5 M531.0 245.8V262.5 M531.5 234.7V262.5 M532.0 234.7V262.5 M532.5 240.3V268.1 M533.0 245.8V262.5 M533.5 245.8V262.5 M534.0 245.8V262.5 M534.5 245.8V262.5 M535.0 245.8V262.5 M535.5 245.8V262.5 M536.0 240.3V262.5 M536.5 240.3V262.5 M537.0 234.7V262.5 M537.5 245.8V262.5 M538.0 245.8V262.5 M538.5 245.8V262.5 M539.0 245.8V262.5 M539.5 245.8V262.5 M540.0 245.8V268.1 M540.5 245.8V268.1 M541.0 245.8V268.1 M541.5 245.8V268.1 M542.0 245.8V268.1 M542.5 245.8V268.1 M543.0 240.3V262.5 M543.5 240.3V262.5 M544.0 245.8V268.1 M544.5 245.8V262.5 M545.0 245.8V262.5 M545.5 245.8V262.5 M546.0 234.7V268.1 M546.5 234.7V268.1 M547.0 245.8V268.1 M547.5 245.8V262.5 M548.0 245.8V262.5 M548.5 245.8V262.5 M549.0 245.8V262.5 M549.5 245.8V262.5 M550.0 240.3V268.1 M550.5 234.7V268.1 M551.0 234.7V268.1 M551.5 234.7V268.1 M552.0 234.7V268.1 M552.5 240.3V262.5 M553.0 240.3V262.5 M553.5 240.3V262.5 M554.0 240.3V262.5 M554.5 240.3V262.5 M555.0 240.3V262.5 M555.5 245.8V262.5 M556.0 240.3V268.1 M556.5 240.3V268.1 M557.0 245.8V268.1 M557.5 240.3V262.5 M558.0 240.3V262.5 M558.5 234.7V262.5 M559.0 234.7V262.5 M559.5 240.3V262.5 M560.0 240.3V262.5 M560.5 234.7V262.5 M561.0 245.8V273.6 M561.5 245.8V268.1 M562.0 245.8V268.1 M562.5 245.8V262.5 M563.0 245.8V262.5 M563.5 245.8V262.5 M564.0 245.8V262.5 M564.5 245.8V262.5 M565.0 245.8V262.5 M565.5 245.8V262.5 M566.0 245.8V268.1 M566.5 245.8V268.1 M567.0 245.8V268.1 M567.5 245.8V262.5 M568.0 240.3V262.5 M568.5 240.3V262.5 M569.0 240.3V262.5 M569.5 240.3V262.5 M570.0 245.8V268.1 M570.5 234.7V262.5 M571.0 234.7V262.5 M571.5 245.8V262.5 M572.0 245.8V262.5 M572.5 240.3V262.5 M573.0 240.3V262.5 M573.5 245.8V268.1 M574.0 245.8V268.1 M574.5 245.8V262.5 M575.0 245.8V273.6 M575.5 240.3V262.5 M576.0 245.8V273.6 M576.5 245.8V262.5 M577.0 245.8V262.5 M577.5 245.8V268.1 M578.0 245.8V268.1 M578.5 245.8V268.1 M579.0 245.8V262.5 M579.5 240.3V262.5 M580.0 240.3V262.5 M580.5 245.8V262.5 M581.0 245.8V262.5 M581.5 245.8V262.5 M582.0 245.8V268.1 M582.5 245.8V268.1 M583.0 245.8V268.1 M583.5 245.8V268.1 M584.0 245.8V268.1 M584.5 245.8V268.1 M585.0 245.8V268.1 M585.5 245.8V268.1 M586.0 245.8V268.1 M586.5 240.3V268.1 M587.0 240.3V262.5 M587.5 240.3V268.1 M588.0 240.3V262.5 M588.5 240.3V262.5 M589.0 240.3V262.5 M589.5 240.3V268.1 M590.0 234.7V262.5 M590.5 234.7V268.1 M591.0 234.7V268.1 M591.5 234.7V268.1 M592.0 240.3V268.1 M592.5 240.3V268.1 M593.0 240.3V262.5 M593.5 234.7V262.5 M594.0 234.7V262.5 M594.5 234.7V262.5 M595.0 234.7V262.5 M595.5 240.3V262.5 M596.0 240.3V262.5 M596.5 240.3V262.5 M597.0 240.3V262.5 M597.5 240.3V262.5 M598.0 234.7V262.5 M598.5 234.7V268.1 M599.0 240.3V268.1 M599.5 240.3V268.1 M600.0 240.3V273.6 M600.5 240.3V262.5 M601.0 240.3V262.5 M601.5 234.7V268.1 M602.0 234.7V268.1 M602.5 234.7V268.1 M603.0 240.3V268.1 M603.5 240.3V262.5 M604.0 240.3V262.5 M604.5 240.3V262.5 M605.0 240.3V262.5 M605.5 240.3V262.5 M606.0 240.3V262.5 M606.5 240.3V262.5 M607.0 240.3V262.5 M607.5 240.3V262.5 M608.0 240.3V262.5 M608.5 240.3V262.5 M609.0 240.3V268.1 M609.5 240.3V262.5 M610.0 240.3V262.5 M610.5 240.3V262.5 M611.0 234.7V268.1 M611.5 240.3V262.5 M612.0 240.3V262.5 M612.5 240.3V268.1 M613.0 240.3V262.5 M613.5 240.3V262.5 M614.0 240.3V262.5 M614.5 240.3V262.5 M615.0 229.2V273.6 M615.5 229.2V273.6 M616.0 234.7V262.5 M616.5 234.7V262.5 M617.0 234.7V262.5 M617.5 234.7V262.5 M618.0 234.7V262.5 M618.5 234.7V262.5 M619.0 229.2V268.1 M619.5 229.2V268.1 M620.0 229.2V262.5 M620.5 229.2V257.0 M621.0 229.2V262.5 M621.5 229.2V262.5 M622.0 223.6V257.0 M622.5 229.2V257.0 M623.0 229.2V257.0 M623.5 223.6V257.0 M624.0 218.0V257.0 M624.5 229.2V257.0 M625.0 229.2V257.0 M625.5 229.2V262.5 M626.0 229.2V257.0 M626.5 229.2V257.0 M627.0 229.2V262.5 M627.5 229.2V262.5 M628.0 218.0V268.1 M628.5 218.0V268.1 M629.0 229.2V257.0 M629.5 229.2V257.0 M630.0 218.0V257.0 M630.5 229.2V262.5 M631.0 229.2V262.5 M631.5 218.0V257.0 M632.0 218.0V251.4 M632.5 229.2V262.5 M633.0 218.0V257.0 M633.5 218.0V262.5 M634.0 223.6V257.0 M634.5 223.6V257.0 M635.0 223.6V268.1 M635.5 223.6V257.0 M636.0 229.2V257.0 M636.5 223.6V257.0 M637.0 223.6V257.0 M637.5 223.6V257.0 M638.0 223.6V257.0 M638.5 229.2V262.5 M639.0 229.2V257.0 M639.5 229.2V257.0 M640.0 218.0V262.5 M640.5 229.2V262.5 M641.0 229.2V257.0 M641.5 229.2V257.0 M642.0 223.6V251.4 M642.5 229.2V268.1 M643.0 229.2V251.4 M643.5 218.0V251.4 M644.0 218.0V251.4 M644.5 218.0V257.0 M645.0 223.6V257.0 M645.5 223.6V251.4 M646.0 223.6V251.4 M646.5 223.6V251.4 M647.0 218.0V251.4 M647.5 218.0V251.4 M648.0 218.0V251.4 M648.5 206.9V251.4 M649.0 206.9V251.4 M649.5 218.0V245.8 M650.0 218.0V245.8 M650.5 218.0V245.8 M651.0 218.0V245.8 M651.5 218.0V251.4 M652.0 223.6V245.8 M652.5 223.6V245.8 M653.0 218.0V257.0 M653.5 218.0V257.0 M654.0 212.5V245.8 M654.5 212.5V245.8 M655.0 212.5V245.8 M655.5 212.5V245.8 M656.0 212.5V245.8 M656.5 218.0V245.8 M657.0 218.0V251.4 M657.5 212.5V245.8 M658.0 218.0V251.4 M658.5 218.0V245.8 M659.0 218.0V251.4 M659.5 218.0V251.4 M660.0 218.0V251.4 M660.5 218.0V245.8 M661.0 218.0V245.8 M661.5 218.0V245.8 M662.0 206.9V245.8 M662.5 206.9V245.8 M663.0 206.9V245.8 M663.5 218.0V245.8 M664.0 218.0V251.4 M664.5 206.9V251.4 M665.0 212.5V245.8 M665.5 212.5V245.8 M666.0 218.0V251.4 M666.5 218.0V251.4 M667.0 218.0V251.4 M667.5 218.0V257.0 M668.0 218.0V251.4 M668.5 218.0V257.0 M669.0 218.0V257.0 M669.5 218.0V257.0 M670.0 218.0V251.4 M670.5 218.0V251.4 M671.0 218.0V257.0 M671.5 218.0V251.4 M672.0 218.0V251.4 M672.5 206.9V245.8 M673.0 206.9V245.8 M673.5 206.9V245.8 M674.0 218.0V245.8 M674.5 218.0V251.4 M675.0 223.6V251.4 M675.5 212.5V257.0 M676.0 218.0V257.0 M676.5 223.6V262.5 M677.0 229.2V268.1 M677.5 229.2V268.1 M678.0 229.2V262.5 M678.5 229.2V262.5 M679.0 234.7V268.1 M679.5 234.7V262.5 M680.0 234.7V262.5 M680.5 229.2V262.5 M681.0 234.7V262.5 M681.5 223.6V268.1 M682.0 234.7V268.1 M682.5 234.7V268.1 M683.0 234.7V268.1 M683.5 234.7V262.5 M684.0 234.7V262.5 M684.5 234.7V262.5 M685.0 234.7V268.1 M685.5 234.7V268.1 M686.0 234.7V268.1 M686.5 229.2V268.1 M687.0 234.7V262.5 M687.5 234.7V268.1 M688.0 234.7V262.5 M688.5 229.2V262.5 M689.0 229.2V262.5 M689.5 234.7V262.5 M690.0 229.2V268.1 M690.5 229.2V268.1 M691.0 229.2V262.5 M691.5 234.7V273.6 M692.0 234.7V262.5 M692.5 234.7V262.5 M693.0 234.7V262.5 M693.5 234.7V273.6 M694.0 234.7V273.6 M694.5 223.6V268.1 M695.0 234.7V262.5 M695.5 229.2V262.5 M696.0 229.2V262.5 M696.5 234.7V268.1 M697.0 229.2V262.5 M697.5 234.7V268.1 M698.0 234.7V268.1 M698.5 234.7V262.5 M699.0 234.7V268.1 M699.5 234.7V262.5 M700.0 234.7V262.5 M700.5 229.2V262.5 M701.0 229.2V262.5 M701.5 234.7V268.1 M702.0 234.7V268.1 M702.5 234.7V268.1 M703.0 229.2V262.5 M703.5 229.2V268.1 M704.0 229.2V268.1 M704.5 234.7V273.6 M705.0 234.7V273.6 M705.5 229.2V273.6 M706.0 229.2V268.1 M706.5 234.7V279.2 M707.0 234.7V279.2 M707.5 234.7V279.2 M708.0 223.6V268.1 M708.5 223.6V268.1 M709.0 234.7V273.6 M709.5 234.7V268.1 M710.0 229.2V273.6 M710.5 229.2V273.6 M711.0 234.7V268.1 M711.5 223.6V273.6 M712.0 223.6V273.6 M712.5 234.7V273.6 M713.0 234.7V273.6 M713.5 229.2V268.1 M714.0 234.7V273.6 M714.5 234.7V273.6 M715.0 234.7V273.6 M715.5 223.6V268.1 M716.0 223.6V268.1 M716.5 223.6V279.2 M717.0 223.6V279.2 M717.5 223.6V279.2 M718.0 234.7V268.1 M718.5 229.2V273.6 M719.0 229.2V268.1 M719.5 234.7V268.1 M720.0 223.6V268.1 M720.5 223.6V268.1 M721.0 223.6V268.1 M721.5 240.3V273.6 M722.0 240.3V273.6 M722.5 240.3V273.6 M723.0 240.3V273.6 M723.5 240.3V273.6 M724.0 240.3V273.6 M724.5 245.8V284.8 M725.0 245.8V284.8 M725.5 240.3V290.3 M726.0 240.3V290.3 M726.5 245.8V279.2 M727.0 240.3V279.2 M727.5 240.3V279.2 M728.0 245.8V295.9 M728.5 251.4V284.8 M729.0 245.8V290.3 M729.5 251.4V284.8 M730.0 251.4V290.3 M730.5 251.4V290.3 M731.0 251.4V295.9 M731.5 257.0V295.9 M732.0 257.0V295.9 M732.5 257.0V301.4 M733.0 257.0V290.3 M733.5 251.4V290.3 M734.0 251.4V295.9 M734.5 257.0V290.3 M735.0 245.8V290.3 M735.5 245.8V290.3 M736.0 257.0V295.9 M736.5 257.0V295.9 M737.0 257.0V301.4 M737.5 257.0V295.9 M738.0 257.0V295.9 M738.5 257.0V295.9 M739.0 262.5V301.4 M739.5 257.0V295.9 M740.0 262.5V312.6 M740.5 262.5V312.6 M741.0 257.0V301.4 M741.5 268.1V301.4 M742.0 268.1V301.4 M742.5 268.1V307.0 M743.0 268.1V307.0 M743.5 257.0V307.0 M744.0 257.0V307.0 M744.5 268.1V318.1 M745.0 268.1V318.1 M745.5 268.1V318.1 M746.0 268.1V318.1 M746.5 273.6V318.1 M747.0 262.5V307.0 M747.5 257.0V307.0 M748.0 273.6V307.0 M748.5 273.6V307.0 M749.0 273.6V312.6 M749.5 273.6V312.6 M750.0 257.0V307.0 M750.5 262.5V307.0 M751.0 268.1V312.6 M751.5 273.6V312.6 M752.0 273.6V312.6 M752.5 268.1V307.0 M753.0 268.1V307.0 M753.5 262.5V307.0 M754.0 268.1V307.0 M754.5 268.1V312.6 M755.0 273.6V312.6 M755.5 268.1V312.6 M756.0 268.1V307.0 M756.5 257.0V312.6 M757.0 268.1V318.1 M757.5 262.5V312.6 M758.0 273.6V307.0 M758.5 273.6V307.0 M759.0 273.6V312.6 M759.5 273.6V312.6 M760.0 273.6V312.6 M760.5 273.6V312.6 M761.0 268.1V307.0 M761.5 268.1V307.0 M762.0 268.1V307.0 M762.5 262.5V312.6 M763.0 262.5V312.6 M763.5 273.6V312.6 M764.0 273.6V312.6 M764.5 273.6V307.0 M765.0 268.1V307.0 M765.5 268.1V307.0 M766.0 268.1V307.0 M766.5 268.1V307.0 M767.0 273.6V312.6 M767.5 273.6V312.6 M768.0 273.6V307.0 M768.5 268.1V312.6 M769.0 268.1V312.6 M769.5 268.1V307.0 M770.0 268.1V312.6 M770.5 273.6V307.0 M771.0 273.6V307.0 M771.5 273.6V307.0 M772.0 273.6V307.0 M772.5 273.6V312.6 M773.0 273.6V312.6 M773.5 262.5V312.6 M774.0 262.5V312.6 M774.5 273.6V312.6 M775.0 273.6V307.0 M775.5 268.1V307.0 M776.0 273.6V307.0 M776.5 273.6V307.0 M777.0 273.6V307.0 M777.5 273.6V312.6 M778.0 273.6V307.0 M778.5 273.6V307.0 M779.0 273.6V307.0 M779.5 262.5V312.6 M780.0 262.5V312.6 M780.5 273.6V312.6 M781.0 273.6V312.6 M781.5 273.6V307.0 M782.0 273.6V307.0 M782.5 268.1V307.0 M783.0 268.1V307.0 M783.5 273.6V307.0 M784.0 273.6V307.0 M784.5 273.6V318.1 M785.0 273.6V307.0 M785.5 273.6V307.0 M786.0 273.6V307.0 M786.5 273.6V307.0 M787.0 273.6V318.1 M787.5 273.6V318.1 M788.0 279.2V318.1 M788.5 279.2V318.1 M789.0 273.6V312.6 M789.5 273.6V312.6 M790.0 279.2V312.6 M790.5 284.8V318.1 M791.0 284.8V318.1 M791.5 284.8V318.1 M792.0 284.8V318.1 M792.5 279.2V318.1 M793.0 284.8V318.1 M793.5 290.3V329.2 M794.0 290.3V318.1 M794.5 290.3V318.1 M795.0 290.3V318.1 M795.5 290.3V318.1 M796.0 290.3V318.1 M796.5 284.8V318.1 M797.0 290.3V323.7 M797.5 284.8V323.7 M798.0 284.8V323.7 M798.5 290.3V323.7 M799.0 290.3V323.7 M799.5 284.8V323.7 M800.0 284.8V323.7 M800.5 284.8V323.7 M801.0 295.9V318.1 M801.5 295.9V318.1 M802.0 295.9V323.7 M802.5 290.3V318.1 M803.0 290.3V318.1 M803.5 295.9V329.2 M804.0 295.9V323.7 M804.5 295.9V329.2 M805.0 284.8V323.7 M805.5 284.8V323.7 M806.0 290.3V329.2 M806.5 290.3V329.2 M807.0 295.9V329.2 M807.5 295.9V329.2 M808.0 295.9V329.2 M808.5 284.8V329.2 M809.0 301.4V323.7 M809.5 301.4V334.8 M810.0 301.4V334.8 M810.5 301.4V334.8 M811.0 295.9V323.7 M811.5 301.4V323.7 M812.0 301.4V323.7 M812.5 301.4V323.7 M813.0 301.4V323.7 M813.5 301.4V323.7 M814.0 290.3V323.7 M814.5 301.4V334.8 M815.0 301.4V334.8 M815.5 301.4V323.7 M816.0 295.9V323.7 M816.5 295.9V323.7 M817.0 301.4V323.7 M817.5 301.4V323.7 M818.0 301.4V323.7 M818.5 290.3V329.2 M819.0 290.3V329.2 M819.5 301.4V334.8 M820.0 301.4V334.8 M820.5 301.4V323.7 M821.0 295.9V329.2 M821.5 295.9V323.7 M822.0 301.4V329.2 M822.5 301.4V323.7 M823.0 301.4V323.7 M823.5 301.4V323.7 M824.0 295.9V329.2 M824.5 290.3V334.8 M825.0 290.3V334.8 M825.5 301.4V323.7 M826.0 301.4V323.7 M826.5 301.4V323.7 M827.0 301.4V323.7 M827.5 301.4V323.7 M828.0 301.4V323.7 M828.5 301.4V323.7 M829.0 301.4V323.7 M829.5 295.9V329.2 M830.0 295.9V329.2 M830.5 295.9V323.7 M831.0 301.4V329.2 M831.5 301.4V329.2 M832.0 295.9V323.7 M832.5 295.9V323.7 M833.0 295.9V323.7 M833.5 301.4V329.2 M834.0 290.3V323.7 M834.5 295.9V323.7 M835.0 295.9V323.7 M835.5 295.9V318.1 M836.0 284.8V318.1 M836.5 284.8V318.1 M837.0 295.9V318.1 M837.5 290.3V318.1 M838.0 284.8V318.1 M838.5 290.3V318.1 M839.0 290.3V318.1 M839.5 284.8V323.7 M840.0 290.3V318.1 M840.5 279.2V318.1 M841.0 279.2V312.6 M841.5 273.6V318.1 M842.0 284.8V312.6 M842.5 284.8V312.6 M843.0 284.8V312.6 M843.5 284.8V318.1 M844.0 284.8V323.7 M844.5 273.6V312.6 M845.0 273.6V312.6 M845.5 284.8V312.6 M846.0 284.8V312.6 M846.5 284.8V312.6 M847.0 284.8V312.6 M847.5 284.8V312.6 M848.0 273.6V312.6 M848.5 273.6V312.6 M849.0 284.8V318.1 M849.5 284.8V312.6 M850.0 284.8V312.6 M850.5 284.8V312.6 M851.0 284.8V312.6 M851.5 279.2V318.1 M852.0 279.2V318.1 M852.5 284.8V323.7 M853.0 284.8V323.7 M853.5 279.2V323.7 M854.0 273.6V323.7 M854.5 273.6V323.7 M855.0 268.1V312.6 M855.5 279.2V312.6 M856.0 273.6V318.1 M856.5 279.2V312.6 M857.0 279.2V312.6 M857.5 273.6V312.6 M858.0 273.6V312.6 M858.5 273.6V312.6 M859.0 279.2V312.6 M859.5 279.2V323.7 M860.0 279.2V323.7 M860.5 279.2V312.6 M861.0 273.6V312.6 M861.5 273.6V312.6 M862.0 279.2V312.6 M862.5 279.2V312.6 M863.0 279.2V312.6 M863.5 268.1V323.7 M864.0 273.6V318.1 M864.5 279.2V312.6 M865.0 279.2V318.1 M865.5 279.2V318.1 M866.0 279.2V318.1" stroke="#ff00ff" stroke-width="0.75" fill="none"/>
<path d="M157 268.9V379 M162 271.2V358 M170 275.1V306 M174 276.0V335 M176 276.0V335 M181 276.0V318 M187 276.1V357 M200 276.3V368 M214 276.6V312 M218.5 276.7V318 M243.6 277.4V368 M259 277.8V312 M264 277.9V312 M286 268.0V318 M297.5 256.7V340 M316 269.3V295 M336.5 278.0V312 M374 278.0V417 M390 278.0V312 M397.6 278.0V385 M423 274.8V385 M439.4 271.2V328 M443 271.0V401 M446.5 270.3V323 M463 258.9V345.5 M468 258.0V289 M484 255.0V323 M493.8 255.0V323 M512 254.9V289 M527 254.8V279 M532 254.7V279 M543.5 254.6V346 M586.6 252.5V313 M596.5 252.0V295 M601 252.0V285 M685 247.8V351 M723.5 257.2V301 M734.6 274.0V334 M750.8 290.0V439 M754 290.1V340 M789.4 296.9V328 M812.5 312.7V534 M842.4 300.4V334 M852.4 297.4V383.5 M857.8 296.2V412 M861.5 295.4V429" stroke="#e848e8" stroke-width="1.1" fill="none"/>
<path d="M617.3 250V579 M709.3 212V612 M711.8 212V668 M743 277V316" stroke="#f040f0" stroke-width="1.8" fill="none"/>
<path d="M646.8 218V746.0" stroke="#f020e0" stroke-width="2" fill="none"/>
<path d="M642.5 143.3V668" stroke="#e84020" stroke-width="1.1" fill="none"/>
<rect x="55.5" y="143.3" width="988.0" height="602.7" fill="none" stroke="#111" stroke-width="1.5" />
<path d="M670 204.5H684 M677 197.5V211.5" stroke="#000" stroke-width="1.5"/>
<g filter="url(#sh)"><rect x="676.5" y="216.5" width="190" height="18.5" fill="#ffffff" stroke="#c8c8c8" stroke-width="1"/></g>
<text x="681" y="229.7" font-family="'Liberation Sans', sans-serif" font-size="12.21" fill="#3a3a3a" textLength="181.5" lengthAdjust="spacingAndGlyphs" >2024-08-23 14.13.20, value: 8,30000019073486</text>
<text x="700.8" y="73" font-family="'Liberation Sans', sans-serif" font-size="13.81" fill="#1a1a1a" stroke="#1a1a1a" stroke-width="0.3" textLength="249.8" lengthAdjust="spacingAndGlyphs" >PF Prodelin 370 cm / Lucenec-Slovakia</text>
<text x="700" y="96" font-family="'Liberation Sans', sans-serif" font-size="14.53" fill="#1a1a1a" stroke="#1a1a1a" stroke-width="0.3" textLength="250.6" lengthAdjust="spacingAndGlyphs" >f=11602,760 MHz_H_ : Atlantis Radio</text>
<text x="728.3" y="118.5" font-family="'Liberation Sans', sans-serif" font-size="14.39" fill="#1a1a1a" stroke="#1a1a1a" stroke-width="0.3" textLength="167.6" lengthAdjust="spacingAndGlyphs" >Locked Uptime : 24:21:46</text>
<g><rect x="573" y="72" width="54" height="50" fill="#ffffff"/><path d="M582.1 112.5 A24 24 0 1 1 624.35 98.5 M624.1 101.8 A24 24 0 0 1 618.7 112.5" stroke="#1a2a80" stroke-width="1.5" fill="none"/><path d="M582 112.8H619" stroke="#1a2a80" stroke-width="1.3"/><path d="M591.3 76.5 L604.5 111.5 M592.8 77 L606.5 111" stroke="#3a4a90" stroke-width="0.75" fill="none"/><path d="M591.8 78 Q590.5 92 595 99.5 L601 105" stroke="#4a5aa0" stroke-width="0.75" fill="none"/><circle cx="590" cy="103.8" r="2.8" stroke="#3a4a90" stroke-width="0.9" fill="none"/><path d="M587.5 107 Q590 111 593 112.5 M591.5 106.8 Q594 110 598 112" stroke="#3a4a90" stroke-width="0.8" fill="none"/><path d="M600 93.8 H610 L604 97.5" stroke="#5a6ab0" stroke-width="0.9" fill="none"/><path d="M612.5 84.5 Q616 89 616.5 96.5 M615.5 82.5 Q620 88 620 96.5" stroke="#c02020" stroke-width="1.5" fill="none"/><text x="575.3" y="120.2" font-family="Liberation Serif" font-weight="bold" font-size="7.2" stroke-width="0.35" textLength="50.2" lengthAdjust="spacingAndGlyphs"><tspan fill="#b02020" stroke="#b02020">DX</tspan><tspan fill="#1a2a80" stroke="#1a2a80">SATCS.COM</tspan></text></g>
<rect x="1055.8" y="92.5" width="139" height="641.5" fill="none" stroke="#d4d4d4" stroke-width="1" rx="1.5" />
<rect x="1060" y="86" width="88" height="12" fill="#f3f3f3" />
<text x="1062" y="96.2" font-family="'Liberation Sans', sans-serif" font-size="11.34" fill="#24249a" stroke="#24249a" stroke-width="0.45" textLength="84.3" lengthAdjust="spacingAndGlyphs" >Transponder (AU) [BS]</text>
<text x="1062" y="123.0" font-family="'Liberation Sans', sans-serif" font-size="11.05" fill="#3a3a3a" stroke="#3a3a3a" stroke-width="0.3" textLength="42.5" lengthAdjust="spacingAndGlyphs" >Frequency:</text>
<text x="1123" y="123.0" font-family="'Liberation Sans', sans-serif" font-size="11.05" fill="#228822" stroke="#228822" stroke-width="0.35" font-weight="bold" textLength="59.5" lengthAdjust="spacingAndGlyphs" >11602,595 MHz</text>
<text x="1062" y="156.2" font-family="'Liberation Sans', sans-serif" font-size="11.05" fill="#3a3a3a" stroke="#3a3a3a" stroke-width="0.3" textLength="47" lengthAdjust="spacingAndGlyphs" >Polarization:</text>
<text x="1123" y="156.2" font-family="'Liberation Sans', sans-serif" font-size="11.05" fill="#228822" stroke="#228822" stroke-width="0.35" font-weight="bold" textLength="28" lengthAdjust="spacingAndGlyphs" >Vertical</text>
<text x="1062" y="189.39999999999998" font-family="'Liberation Sans', sans-serif" font-size="11.05" fill="#3a3a3a" stroke="#3a3a3a" stroke-width="0.3" textLength="52" lengthAdjust="spacingAndGlyphs" >Symbol Rate:</text>
<text x="1123" y="189.39999999999998" font-family="'Liberation Sans', sans-serif" font-size="11.05" fill="#228822" stroke="#228822" stroke-width="0.35" font-weight="bold" textLength="51" lengthAdjust="spacingAndGlyphs" >171,011 KS/s</text>
<text x="1062" y="222.59999999999997" font-family="'Liberation Sans', sans-serif" font-size="11.05" fill="#3a3a3a" stroke="#3a3a3a" stroke-width="0.3" textLength="38" lengthAdjust="spacingAndGlyphs" >Standard:</text>
<text x="1123" y="222.59999999999997" font-family="'Liberation Sans', sans-serif" font-size="11.05" fill="#228822" stroke="#228822" stroke-width="0.35" font-weight="bold" textLength="29" lengthAdjust="spacingAndGlyphs" >DVB-S2</text>
<text x="1062" y="255.79999999999995" font-family="'Liberation Sans', sans-serif" font-size="11.05" fill="#3a3a3a" stroke="#3a3a3a" stroke-width="0.3" textLength="45" lengthAdjust="spacingAndGlyphs" >Modulation:</text>
<text x="1123" y="255.79999999999995" font-family="'Liberation Sans', sans-serif" font-size="11.05" fill="#228822" stroke="#228822" stroke-width="0.35" font-weight="bold" textLength="34" lengthAdjust="spacingAndGlyphs" >QPSK-S2</text>
<text x="1062" y="288.99999999999994" font-family="'Liberation Sans', sans-serif" font-size="11.05" fill="#3a3a3a" stroke="#3a3a3a" stroke-width="0.3" textLength="18" lengthAdjust="spacingAndGlyphs" >FEC:</text>
<text x="1123" y="288.99999999999994" font-family="'Liberation Sans', sans-serif" font-size="11.05" fill="#228822" stroke="#228822" stroke-width="0.35" font-weight="bold" textLength="13" lengthAdjust="spacingAndGlyphs" >3/4</text>
<text x="1062" y="322.19999999999993" font-family="'Liberation Sans', sans-serif" font-size="11.05" fill="#3a3a3a" stroke="#3a3a3a" stroke-width="0.3" textLength="32" lengthAdjust="spacingAndGlyphs" >RollOff:</text>
<text x="1123" y="322.19999999999993" font-family="'Liberation Sans', sans-serif" font-size="11.05" fill="#228822" stroke="#228822" stroke-width="0.35" font-weight="bold" textLength="15" lengthAdjust="spacingAndGlyphs" >0.20</text>
<text x="1062" y="355.3999999999999" font-family="'Liberation Sans', sans-serif" font-size="11.05" fill="#3a3a3a" stroke="#3a3a3a" stroke-width="0.3" textLength="22" lengthAdjust="spacingAndGlyphs" >Pilot:</text>
<text x="1123" y="355.3999999999999" font-family="'Liberation Sans', sans-serif" font-size="11.05" fill="#228822" stroke="#228822" stroke-width="0.35" font-weight="bold" textLength="13" lengthAdjust="spacingAndGlyphs" >ON</text>
<text x="1062" y="388.5999999999999" font-family="'Liberation Sans', sans-serif" font-size="11.05" fill="#3a3a3a" stroke="#3a3a3a" stroke-width="0.3" textLength="39" lengthAdjust="spacingAndGlyphs" >Spectrum:</text>
<text x="1123" y="388.5999999999999" font-family="'Liberation Sans', sans-serif" font-size="11.05" fill="#228822" stroke="#228822" stroke-width="0.35" font-weight="bold" textLength="33" lengthAdjust="spacingAndGlyphs" >Inverted</text>
<text x="1062" y="421.7999999999999" font-family="'Liberation Sans', sans-serif" font-size="11.05" fill="#3a3a3a" stroke="#3a3a3a" stroke-width="0.3" textLength="47" lengthAdjust="spacingAndGlyphs" >Frame Type:</text>
<text x="1123" y="421.7999999999999" font-family="'Liberation Sans', sans-serif" font-size="11.05" fill="#228822" stroke="#228822" stroke-width="0.35" font-weight="bold" textLength="47" lengthAdjust="spacingAndGlyphs" >Long Frame</text>
<text x="1062" y="454.9999999999999" font-family="'Liberation Sans', sans-serif" font-size="11.05" fill="#3a3a3a" stroke="#3a3a3a" stroke-width="0.3" textLength="45" lengthAdjust="spacingAndGlyphs" >Code Mode:</text>
<text x="1123" y="454.9999999999999" font-family="'Liberation Sans', sans-serif" font-size="11.05" fill="#228822" stroke="#228822" stroke-width="0.35" font-weight="bold" textLength="20" lengthAdjust="spacingAndGlyphs" >CCM</text>
<text x="1062" y="488.1999999999999" font-family="'Liberation Sans', sans-serif" font-size="11.05" fill="#3a3a3a" stroke="#3a3a3a" stroke-width="0.3" textLength="50" lengthAdjust="spacingAndGlyphs" >Stream type:</text>
<text x="1123" y="488.1999999999999" font-family="'Liberation Sans', sans-serif" font-size="11.05" fill="#228822" stroke="#228822" stroke-width="0.35" font-weight="bold" textLength="38" lengthAdjust="spacingAndGlyphs" >Transport</text>
<text x="1062" y="521.3999999999999" font-family="'Liberation Sans', sans-serif" font-size="11.05" fill="#3a3a3a" stroke="#3a3a3a" stroke-width="0.3" textLength="18" lengthAdjust="spacingAndGlyphs" >ISSYI</text>
<text x="1123" y="521.3999999999999" font-family="'Liberation Sans', sans-serif" font-size="11.05" fill="#228822" stroke="#228822" stroke-width="0.35" font-weight="bold" textLength="16" lengthAdjust="spacingAndGlyphs" >OFF</text>
<text x="1062" y="554.5999999999999" font-family="'Liberation Sans', sans-serif" font-size="11.05" fill="#3a3a3a" stroke="#3a3a3a" stroke-width="0.3" textLength="19" lengthAdjust="spacingAndGlyphs" >NPD:</text>
<text x="1123" y="554.5999999999999" font-family="'Liberation Sans', sans-serif" font-size="11.05" fill="#228822" stroke="#228822" stroke-width="0.35" font-weight="bold" textLength="16" lengthAdjust="spacingAndGlyphs" >OFF</text>
<text x="1062" y="587.8" font-family="'Liberation Sans', sans-serif" font-size="11.05" fill="#3a3a3a" stroke="#3a3a3a" stroke-width="0.3" textLength="38" lengthAdjust="spacingAndGlyphs" >RF Level:</text>
<text x="1123" y="587.8" font-family="'Liberation Sans', sans-serif" font-size="11.05" fill="#228822" stroke="#228822" stroke-width="0.35" font-weight="bold" textLength="33" lengthAdjust="spacingAndGlyphs" >-49 dBm</text>
<text x="1062" y="621.0" font-family="'Liberation Sans', sans-serif" font-size="11.05" fill="#3a3a3a" stroke="#3a3a3a" stroke-width="0.3" textLength="32" lengthAdjust="spacingAndGlyphs" >BitRate:</text>
<text x="1123" y="621.0" font-family="'Liberation Sans', sans-serif" font-size="11.05" fill="#228822" stroke="#228822" stroke-width="0.35" font-weight="bold" textLength="49" lengthAdjust="spacingAndGlyphs" >0,247 Mbit/s</text>
<text x="1062" y="654.2" font-family="'Liberation Sans', sans-serif" font-size="11.05" fill="#3a3a3a" stroke="#3a3a3a" stroke-width="0.3" textLength="52" lengthAdjust="spacingAndGlyphs" >CarrierWidth:</text>
<text x="1123" y="654.2" font-family="'Liberation Sans', sans-serif" font-size="11.05" fill="#228822" stroke="#228822" stroke-width="0.35" font-weight="bold" textLength="41.5" lengthAdjust="spacingAndGlyphs" >0,205 MHz</text>
<text x="1062" y="703.2" font-family="'Liberation Sans', sans-serif" font-size="11.05" fill="#3a3a3a" stroke="#3a3a3a" stroke-width="0.3" textLength="29" lengthAdjust="spacingAndGlyphs" >MIS (0):</text>
<rect x="1123.2" y="690" width="56.5" height="17.6" fill="#ffffff" />
<text x="1126" y="702.5" font-family="'Liberation Sans', sans-serif" font-size="11.63" fill="#4a4a4a" stroke="#4a4a4a" stroke-width="0.2" textLength="25" lengthAdjust="spacingAndGlyphs" >Single</text>
<path d="M1169.5 696.5 L1172.5 699.5 L1175.5 696.5" stroke="#999" stroke-width="1" fill="none"/>
<rect x="1056.5" y="744" width="136.5" height="23.5" fill="#ffffff" stroke="#c4c4c4" stroke-width="1" rx="3" />
<g><rect x="1119.2" y="748.2" width="11.5" height="13.8" fill="#fff" stroke="#8a8a8a" stroke-width="1"/><rect x="1119.7" y="752" width="10.5" height="2.6" fill="#2a6ad0"/><rect x="1119.7" y="757.5" width="10.5" height="2.8" fill="#d8c8b0"/></g>
<g>
<rect x="9.5" y="778.5" width="96.0" height="18.8" fill="url(#gG)" />
<rect x="9.5" y="778.5" width="96" height="18.8" fill="none" stroke="#a8a8a8" stroke-width="1" rx="1.5" />
</g>
<text x="13.0" y="793.1" font-family="'Liberation Sans', sans-serif" font-size="10.76" fill="#140c0c" stroke="#140c0c" stroke-width="0.6" textLength="29" lengthAdjust="spacingAndGlyphs" >Present</text>
<g>
<rect x="9.5" y="802.3" width="96.0" height="18.8" fill="url(#gG)" />
<rect x="9.5" y="802.3" width="96" height="18.8" fill="none" stroke="#a8a8a8" stroke-width="1" rx="1.5" />
</g>
<text x="13.0" y="816.9" font-family="'Liberation Sans', sans-serif" font-size="10.76" fill="#140c0c" stroke="#140c0c" stroke-width="0.6" textLength="19.5" lengthAdjust="spacingAndGlyphs" >Lock</text>
<g>
<rect x="109.8" y="778.5" width="49.8" height="18.8" fill="url(#gR)" />
<rect x="159.6" y="778.5" width="118.1" height="18.8" fill="url(#gY)" />
<rect x="277.7" y="778.5" width="321.09999999999997" height="18.8" fill="url(#gN)" />
<rect x="109.8" y="778.5" width="489" height="18.8" fill="none" stroke="#a8a8a8" stroke-width="1" rx="1.5" />
</g>
<text x="113.3" y="793.1" font-family="'Liberation Sans', sans-serif" font-size="10.76" fill="#140c0c" stroke="#140c0c" stroke-width="0.6" textLength="40.6" lengthAdjust="spacingAndGlyphs" >Level: 34%</text>
<g>
<rect x="109.8" y="802.3" width="49.8" height="18.8" fill="url(#gR)" />
<rect x="159.6" y="802.3" width="195.00000000000003" height="18.8" fill="url(#gY)" />
<rect x="354.6" y="802.3" width="244.19999999999993" height="18.8" fill="url(#gG)" />
<rect x="109.8" y="802.3" width="489" height="18.8" fill="none" stroke="#a8a8a8" stroke-width="1" rx="1.5" />
</g>
<text x="113.3" y="816.9" font-family="'Liberation Sans', sans-serif" font-size="10.76" fill="#140c0c" stroke="#140c0c" stroke-width="0.6" textLength="51.3" lengthAdjust="spacingAndGlyphs" >Quality: 100%</text>
<g>
<rect x="603.8" y="778.5" width="51.200000000000045" height="18.8" fill="url(#gR)" />
<rect x="655" y="778.5" width="87.5" height="18.8" fill="url(#gY)" />
<rect x="742.5" y="778.5" width="103.79999999999995" height="18.8" fill="url(#gG)" />
<rect x="603.8" y="778.5" width="242.5" height="18.8" fill="none" stroke="#a8a8a8" stroke-width="1" rx="1.5" />
</g>
<text x="607.3" y="793.1" font-family="'Liberation Sans', sans-serif" font-size="10.76" fill="#140c0c" stroke="#140c0c" stroke-width="0.6" textLength="61" lengthAdjust="spacingAndGlyphs" >preBER: &lt;1.0E-7</text>
<g>
<rect x="850.5" y="778.5" width="51.0" height="18.8" fill="url(#gR)" />
<rect x="901.5" y="778.5" width="87.10000000000002" height="18.8" fill="url(#gY)" />
<rect x="988.6" y="778.5" width="103.89999999999998" height="18.8" fill="url(#gG)" />
<rect x="850.5" y="778.5" width="242" height="18.8" fill="none" stroke="#a8a8a8" stroke-width="1" rx="1.5" />
</g>
<text x="854.0" y="793.1" font-family="'Liberation Sans', sans-serif" font-size="10.76" fill="#140c0c" stroke="#140c0c" stroke-width="0.6" textLength="48" lengthAdjust="spacingAndGlyphs" >BER: &lt;1.0E-7</text>
<g>
<rect x="603.8" y="802.3" width="128.70000000000005" height="18.8" fill="url(#gR)" />
<rect x="732.5" y="802.3" width="65.0" height="18.8" fill="url(#gY)" />
<rect x="797.5" y="802.3" width="295.0" height="18.8" fill="url(#gN)" />
<rect x="603.8" y="802.3" width="488.7" height="18.8" fill="none" stroke="#a8a8a8" stroke-width="1" rx="1.5" />
</g>
<text x="607.3" y="816.9" font-family="'Liberation Sans', sans-serif" font-size="10.76" fill="#140c0c" stroke="#140c0c" stroke-width="0.6" textLength="136" lengthAdjust="spacingAndGlyphs" >SNR: 6,9 dB (Margin: 2,9 dB | Poor)</text>
<g>
<rect x="1096.5" y="778.5" width="96.0" height="18.8" fill="url(#gG)" />
<rect x="1096.5" y="778.5" width="96" height="18.8" fill="none" stroke="#a8a8a8" stroke-width="1" rx="1.5" />
</g>
<text x="1100.0" y="793.1" font-family="'Liberation Sans', sans-serif" font-size="10.76" fill="#140c0c" stroke="#140c0c" stroke-width="0.6" textLength="71.5" lengthAdjust="spacingAndGlyphs" >Input (~282 Kbps)</text>
<g>
<rect x="1096.5" y="802.3" width="96.0" height="18.8" fill="url(#gG)" />
<rect x="1096.5" y="802.3" width="96" height="18.8" fill="none" stroke="#a8a8a8" stroke-width="1" rx="1.5" />
</g>
<text x="1100.0" y="816.9" font-family="'Liberation Sans', sans-serif" font-size="10.76" fill="#140c0c" stroke="#140c0c" stroke-width="0.6" textLength="29" lengthAdjust="spacingAndGlyphs" >Sync TS</text>
<line x1="1" y1="827.5" x2="1200" y2="827.5" stroke="#d8d0d8" stroke-width="1" />
<line x1="393.8" y1="830" x2="393.8" y2="848" stroke="#8a8a8a" stroke-width="1.2" />
<line x1="792.3" y1="830" x2="792.3" y2="848" stroke="#8a8a8a" stroke-width="1.2" />
<line x1="1188.6" y1="830" x2="1188.6" y2="848" stroke="#8a8a8a" stroke-width="1.2" />
<text x="142.5" y="843.8" font-family="'Liberation Sans', sans-serif" font-size="11.92" fill="#1a1a1a" font-weight="bold" textLength="114" lengthAdjust="spacingAndGlyphs" >Locked -&gt; Uptime: 24:21:46</text>
<text x="543.8" y="843.8" font-family="'Liberation Sans', sans-serif" font-size="11.92" fill="#1a1a1a" font-weight="bold" textLength="102" lengthAdjust="spacingAndGlyphs" >SYNC 0 | TEI 153 | CC 158</text>
<text x="912.3" y="843.8" font-family="'Liberation Sans', sans-serif" font-size="11.92" fill="#1a1a1a" font-weight="bold" textLength="157.5" lengthAdjust="spacingAndGlyphs" >Best signal: 8,2 dB (2024-08-23 15:26)</text>
<g fill="#9a9a9a"><rect x="1196" y="846" width="1.2" height="1.2"/><rect x="1196" y="843" width="1.2" height="1.2"/><rect x="1196" y="840" width="1.2" height="1.2"/><rect x="1193" y="846" width="1.2" height="1.2"/><rect x="1193" y="843" width="1.2" height="1.2"/><rect x="1190" y="846" width="1.2" height="1.2"/></g></svg>
</body></html>
